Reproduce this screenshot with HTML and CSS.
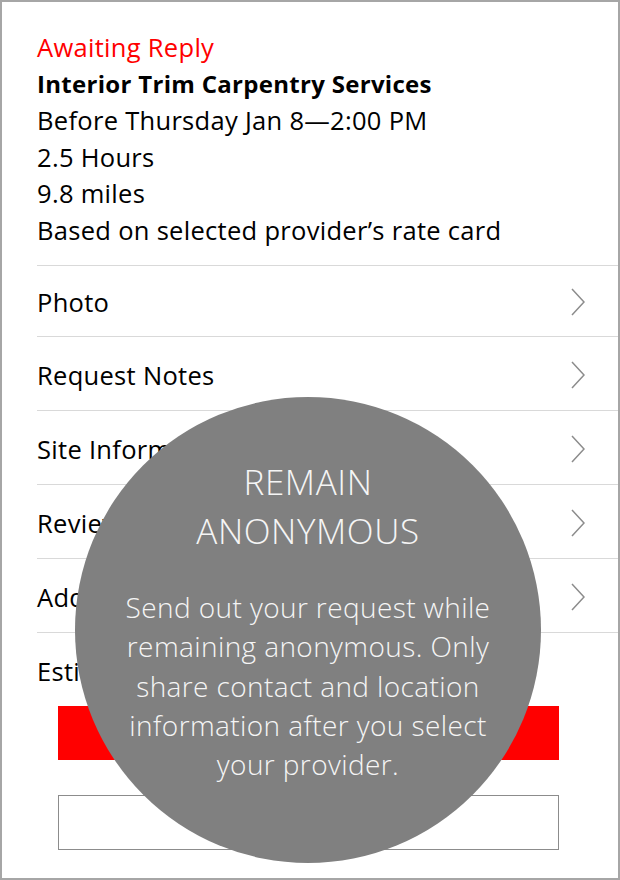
FILE: index.html
```html
<!DOCTYPE html>
<html>
<head>
<meta charset="utf-8">
<title>Request Details</title>
<link rel="stylesheet" href="styles.css">
</head>
<body>
<div class="screen">
    <div class="summary">
        <div class="status">Awaiting Reply</div>
        <div class="title">Interior Trim Carpentry Services</div>
        <div>Before Thursday Jan 8&mdash;2:00 PM</div>
        <div>2.5 Hours</div>
        <div>9.8 miles</div>
        <div>Based on selected provider&rsquo;s rate card</div>
    </div>
    <div class="list">
        <div class="row">
            <span>Photo</span>
            <svg class="chevron" width="14" height="28" viewBox="0 0 14 28"><polyline points="1,1 13,14 1,27"/></svg>
        </div>
        <div class="row">
            <span>Request Notes</span>
            <svg class="chevron" width="14" height="28" viewBox="0 0 14 28"><polyline points="1,1 13,14 1,27"/></svg>
        </div>
        <div class="row">
            <span>Site Information</span>
            <svg class="chevron" width="14" height="28" viewBox="0 0 14 28"><polyline points="1,1 13,14 1,27"/></svg>
        </div>
        <div class="row">
            <span>Review Providers</span>
            <svg class="chevron" width="14" height="28" viewBox="0 0 14 28"><polyline points="1,1 13,14 1,27"/></svg>
        </div>
        <div class="row">
            <span>Add Attachments</span>
            <svg class="chevron" width="14" height="28" viewBox="0 0 14 28"><polyline points="1,1 13,14 1,27"/></svg>
        </div>
        <div class="row row-plain">
            <span>Estimated Cost</span>
        </div>
    </div>
    <div class="actions">
        <div class="btn btn-primary">Send Request</div>
        <div class="btn btn-outline">Cancel</div>
    </div>

    <div class="coach">
        <div class="coach-title">REMAIN<br>ANONYMOUS</div>
        <div class="coach-text">Send out your request while<br>remaining anonymous. Only<br>share contact and location<br>information after you select<br>your provider.</div>
    </div>
</div>
</body>
</html>
```

FILE: styles.css
```css
* {
    box-sizing: border-box;
}
body {
    margin: 0;
    font-family: "Open Sans", Lato, sans-serif;
    color: #000;
    background-color: #fff;
}
.screen {
    position: relative;
    width: 620px;
    height: 880px;
    border: 2px solid #a6a6a6;
    overflow: hidden;
}
.summary {
    padding: 27px 0 16px 35px;
    font-size: 25.5px;
    line-height: 36.6px;
    letter-spacing: 0.3px;
}
.status {
    color: #ff0000;
}
.title {
    font-weight: bold;
    font-size: 24px;
}
.list {
    padding-left: 35px;
}
.row {
    display: flex;
    align-items: center;
    justify-content: space-between;
    height: 74px;
    padding: 4px 33px 0 0;
    border-top: 1px solid #d9d9d9;
    font-size: 25.5px;
    letter-spacing: 0.3px;
}
.row:first-child {
    height: 71px;
    padding-top: 2px;
}
.row-plain {
    border-top: 1px solid #d9d9d9;
}
.chevron {
    fill: none;
    stroke: #8c8c8c;
    stroke-width: 1.5;
}
.actions {
    display: flex;
    flex-direction: column;
    gap: 35px;
    padding: 0 59px 0 56px;
}
.btn {
    height: 54px;
    display: flex;
    align-items: center;
    justify-content: center;
    font-size: 22px;
}
.btn-primary {
    background-color: #ff0000;
    color: #fff;
}
.btn-outline {
    height: 55px;
    border: 1px solid #8c8c8c;
    color: #000;
}
.coach {
    position: absolute;
    left: 73px;
    top: 395px;
    width: 466px;
    height: 466px;
    border-radius: 50%;
    background-color: #808080;
    color: #f5f5f5;
    text-align: center;
    font-weight: 300;
    padding-top: 60px;
}
.coach-title {
    font-size: 35px;
    line-height: 49px;
    letter-spacing: 0.6px;
}
.coach-text {
    margin-top: 33px;
    font-size: 28px;
    line-height: 39.3px;
    letter-spacing: 0.4px;
}
```
